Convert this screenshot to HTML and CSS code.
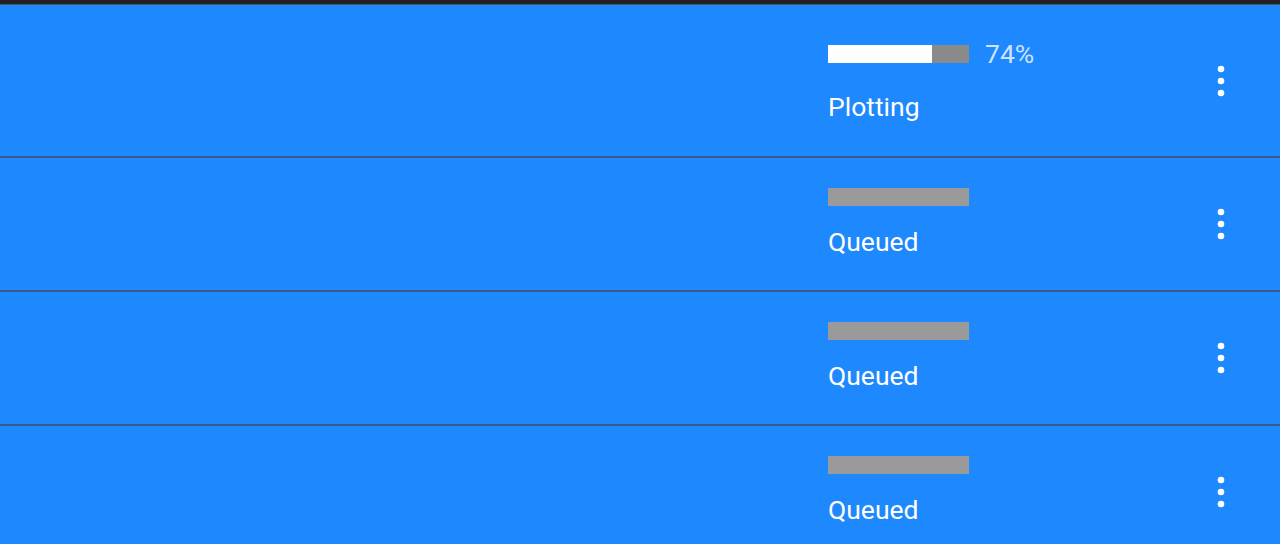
FILE: index.html
```html
<!DOCTYPE html>
<html lang="en">
<head>
<meta charset="utf-8">
<title>Plot queue</title>
<link rel="stylesheet" href="styles.css">
</head>
<body>
<div class="topbar"></div>
<ul class="jobs">
  <li class="job">
    <div class="job-main"></div>
    <div class="status">
      <div class="progress-line progress-line--active">
        <div class="bar"><div class="bar-fill" style="width:74%"></div></div>
        <span class="percent">74%</span>
      </div>
      <div class="label">Plotting</div>
    </div>
    <button class="menu" aria-label="More options">
      <svg width="8" height="32" viewBox="0 0 8 32"><circle cx="4" cy="4" r="3.3"/><circle cx="4" cy="16" r="3.3"/><circle cx="4" cy="28" r="3.3"/></svg>
    </button>
  </li>
  <li class="job">
    <div class="job-main"></div>
    <div class="status">
      <div class="progress-line">
        <div class="bar bar--idle"></div>
      </div>
      <div class="label">Queued</div>
    </div>
    <button class="menu" aria-label="More options">
      <svg width="8" height="32" viewBox="0 0 8 32"><circle cx="4" cy="4" r="3.3"/><circle cx="4" cy="16" r="3.3"/><circle cx="4" cy="28" r="3.3"/></svg>
    </button>
  </li>
  <li class="job">
    <div class="job-main"></div>
    <div class="status">
      <div class="progress-line">
        <div class="bar bar--idle"></div>
      </div>
      <div class="label">Queued</div>
    </div>
    <button class="menu" aria-label="More options">
      <svg width="8" height="32" viewBox="0 0 8 32"><circle cx="4" cy="4" r="3.3"/><circle cx="4" cy="16" r="3.3"/><circle cx="4" cy="28" r="3.3"/></svg>
    </button>
  </li>
  <li class="job">
    <div class="job-main"></div>
    <div class="status">
      <div class="progress-line">
        <div class="bar bar--idle"></div>
      </div>
      <div class="label">Queued</div>
    </div>
    <button class="menu" aria-label="More options">
      <svg width="8" height="32" viewBox="0 0 8 32"><circle cx="4" cy="4" r="3.3"/><circle cx="4" cy="16" r="3.3"/><circle cx="4" cy="28" r="3.3"/></svg>
    </button>
  </li>
</ul>
</body>
</html>
```
FILE: styles.css
```css
html, body {
  margin: 0;
  padding: 0;
  background: #1e88fe;
  font-family: Roboto, "Liberation Sans", sans-serif;
  color: #ffffff;
  overflow: hidden;
}

.topbar {
  height: 4px;
  background: #212121;
  border-bottom: 1px solid #4b5866;
}

.jobs {
  list-style: none;
  margin: 0;
  padding: 0;
}

.job {
  display: grid;
  grid-template-columns: 1fr 369px 48px;
  align-items: center;
  padding-right: 35px;
  height: 132px;
  border-bottom: 2px solid #3b5b85;
  background: #1e88fe;
}

.job:first-child {
  height: 151px;
}

.status {
  display: flex;
  flex-direction: column;
  gap: 21px;
  align-self: start;
  padding-top: 30px;
}

.job:first-child .status {
  padding-top: 32px;
}

.progress-line {
  display: flex;
  align-items: center;
  gap: 16px;
  height: 18px;
}

.progress-line--active {
  height: 34px;
}

.bar {
  width: 141px;
  height: 18px;
  background: #8a8a8a;
  display: flex;
}

.bar--idle {
  background: #9a9a9a;
}

.bar-fill {
  height: 100%;
  background: #ffffff;
}

.percent {
  font-size: 26.5px;
  line-height: 30px;
  color: rgba(255, 255, 255, 0.78);
}

.label {
  font-size: 26.5px;
  line-height: 30px;
  color: #ffffff;
}

.menu {
  width: 48px;
  height: 48px;
  border: 0;
  padding: 0;
  background: transparent;
  display: flex;
  align-items: center;
  justify-content: center;
  cursor: pointer;
}

.menu svg {
  fill: #ffffff;
  display: block;
}
```
